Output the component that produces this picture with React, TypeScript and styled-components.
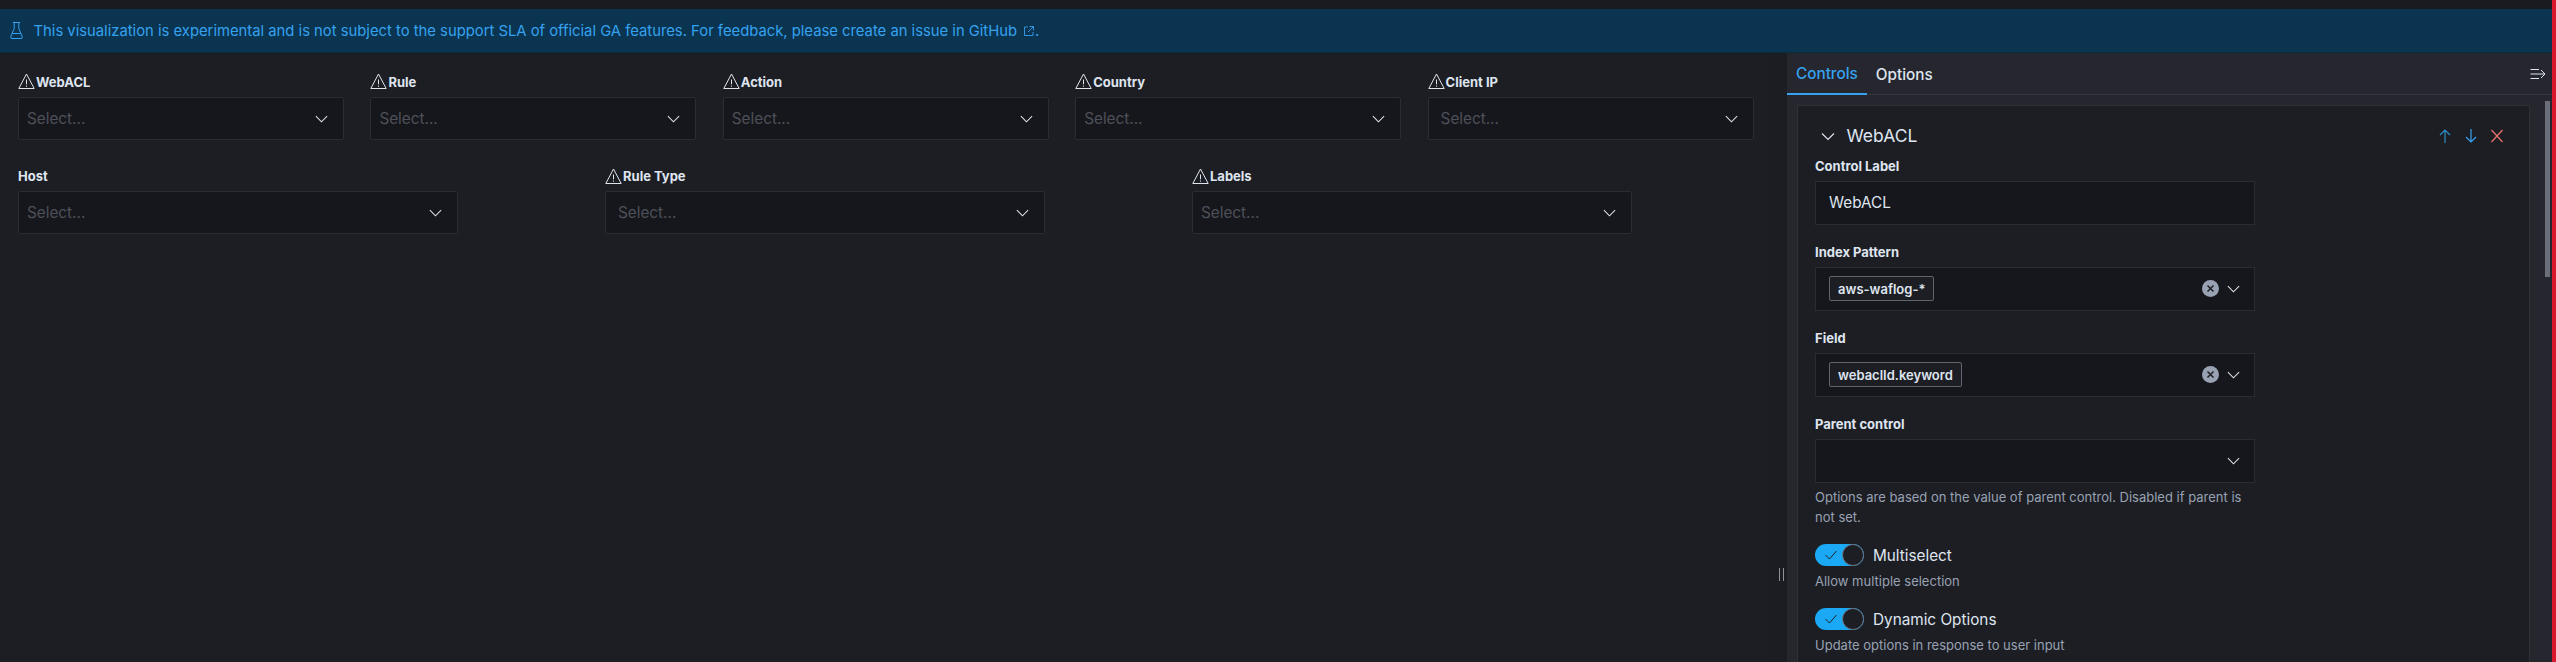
import styled, { createGlobalStyle } from 'styled-components';

const GlobalStyle = createGlobalStyle`
  html, body {
    margin: 0;
    padding: 0;
    height: 100%;
    background: #1d1e24;
    overflow: hidden;
  }
  #root {
    height: 100%;
  }
  * {
    box-sizing: border-box;
  }
`;

const Page = styled.div`
  display: flex;
  width: 2556px;
  height: 662px;
  overflow: hidden;
  font-family: Inter, 'Liberation Sans', sans-serif;
  color: #dfe5ef;
`;

const Content = styled.div`
  flex: 1;
  display: flex;
  flex-direction: column;
  min-width: 0;
`;

const RedEdge = styled.div`
  width: 4px;
  background: #d8182a;
`;

const TopStrip = styled.div`
  height: 9px;
  background: #1a1b20;
`;

const Banner = styled.div`
  height: 44px;
  display: flex;
  align-items: center;
  padding-left: 10px;
  gap: 10.5px;
  background: #0a344f;
  border-bottom: 1px solid #0b2b41;
  color: #36a2ef;
  font-size: 14.8px;
  svg {
    flex: none;
  }
`;

const BannerLink = styled.span`
  display: inline-flex;
  align-items: center;
  gap: 6px;
  margin-left: 4px;
`;

const Main = styled.div`
  flex: 1;
  display: flex;
  min-height: 0;
`;

const Canvas = styled.div`
  width: 1767px;
  padding: 18.5px 0 0 18px;
`;

const FirstRow = styled.div`
  display: grid;
  grid-template-columns: repeat(5, 326px);
  column-gap: 26.4px;
`;

const SecondRow = styled.div`
  display: grid;
  grid-template-columns: repeat(3, 440px);
  column-gap: 147px;
  margin-top: 26.5px;
`;

const FilterLabel = styled.div`
  display: flex;
  align-items: center;
  gap: 1px;
  height: 20px;
  margin-bottom: 5px;
  font-size: 13px;
  font-weight: 700;
  color: #dfe5ef;
`;

const SelectBox = styled.div<{ $inset?: boolean }>`
  height: 43px;
  display: flex;
  align-items: center;
  justify-content: space-between;
  padding: 0 14px 0 ${(p) => (p.$inset ? '12px' : '8px')};
  background: #16171c;
  border: 1px solid #2a2c32;
  border-radius: 2px;
  font-size: 15.3px;
  color: #4d5058;
`;

const Resizer = styled.div`
  width: 20px;
  display: flex;
  justify-content: center;
  padding: 515px 0 0 8px;
  background: #1c1d22;
`;

const Grip = styled.div`
  width: 5px;
  height: 13px;
  border-left: 1.5px solid #8d919b;
  border-right: 1.5px solid #8d919b;
`;

const Panel = styled.div`
  flex: 1;
  display: flex;
  flex-direction: column;
  min-width: 0;
  background: #25262e;
  position: relative;
`;

const TabBar = styled.div`
  height: 42px;
  flex: none;
  display: flex;
  align-items: stretch;
  border-bottom: 1px solid #34353d;
`;

const Tab = styled.div<{ $active?: boolean }>`
  display: flex;
  align-items: center;
  padding: 0 9px;
  height: 42px;
  font-size: 15.3px;
  font-weight: 500;
  color: ${(p) => (p.$active ? '#36a2ef' : '#dfe5ef')};
  border-bottom: ${(p) => (p.$active ? '2px solid #36a2ef' : 'none')};
`;

const CollapseButton = styled.div`
  margin-left: auto;
  display: flex;
  align-items: center;
  padding-right: 6px;
`;

const Card = styled.div`
  flex: 1;
  margin: 9.5px 22.5px 0 9.5px;
  padding: 19px 17.5px 0;
  background: #1d1e24;
  border: 1px solid #2f3037;
  border-bottom: none;
`;

const CardHeader = styled.div`
  display: flex;
  align-items: center;
  height: 22px;
  padding-left: 5px;
  margin-bottom: 9.5px;
  font-size: 17.5px;
  font-weight: 400;
  gap: 10.5px;
`;

const HeaderActions = styled.div`
  margin-left: auto;
  display: flex;
  align-items: center;
  gap: 10px;
  margin-right: 6px;
`;

const Field = styled.div`
  width: 439.5px;
  margin-bottom: 17.5px;
`;

const FieldLabel = styled.div`
  height: 20px;
  display: flex;
  align-items: center;
  margin-bottom: 5px;
  font-size: 13px;
  font-weight: 700;
`;

const TextInput = styled.div`
  height: 43.5px;
  display: flex;
  align-items: center;
  padding: 0 13px;
  background: #16171c;
  border: 1px solid #2a2c32;
  font-size: 15.3px;
  color: #dfe5ef;
`;

const ComboBox = styled.div<{ $empty?: boolean }>`
  height: 43.5px;
  display: flex;
  align-items: center;
  justify-content: ${(p) => (p.$empty ? 'flex-end' : 'flex-start')};
  padding: 0 13px;
  background: #16171c;
  border: 1px solid #2a2c32;
  gap: 7px;
  svg {
    flex: none;
  }
`;

const Pill = styled.span`
  height: 25px;
  display: inline-flex;
  align-items: center;
  padding: 0 8px;
  margin-right: auto;
  background: #1d1e24;
  border: 1px solid #5f6570;
  border-radius: 2px;
  font-size: 13px;
  font-weight: 600;
  color: #dfe5ef;
`;

const ClearIcon = styled.span`
  width: 17px;
  height: 17px;
  border-radius: 50%;
  background: #98a2b3;
  display: flex;
  align-items: center;
  justify-content: center;
  svg {
    display: block;
  }
`;

const HelpText = styled.div<{ $tight?: boolean }>`
  font-size: 13px;
  line-height: 20px;
  color: #98a2b3;
  margin-top: ${(p) => (p.$tight ? '5px' : '4px')};
`;

const SwitchBlock = styled.div`
  margin-bottom: 17px;
`;

const SwitchRow = styled.div`
  display: flex;
  align-items: center;
  gap: 9px;
  height: 22px;
  font-size: 15.3px;
`;

const SwitchTrack = styled.div`
  position: relative;
  width: 49px;
  height: 22px;
  border-radius: 11px;
  background: #1ba9f5;
  display: flex;
  align-items: center;
  padding-left: 9px;
`;

const SwitchThumb = styled.div`
  position: absolute;
  top: 0;
  right: 0;
  width: 22px;
  height: 22px;
  border-radius: 50%;
  background: #1d1e24;
  border: 1px solid #69707d;
`;

const ScrollThumb = styled.div`
  position: absolute;
  top: 48px;
  right: 2px;
  width: 5px;
  height: 176px;
  background: #6a6e78;
`;

const Chevron = ({ size = 15, color = '#dfe5ef' }: { size?: number; color?: string }) => (
  <svg width={size} height={size} viewBox="0 0 16 16" fill="none">
    <path d="M2 5.5 L8 11.5 L14 5.5" stroke={color} strokeWidth="1.1" />
  </svg>
);

const Warning = () => (
  <svg width="17" height="17" viewBox="0 0 17 17" fill="none">
    <path d="M8.5 1 L16.2 15.5 H0.8 Z" stroke="#dfe5ef" strokeWidth="1" strokeLinejoin="round" />
    <path d="M8.5 6.5 V11.3" stroke="#dfe5ef" strokeWidth="1" />
    <path d="M8.5 12.5 V13.7" stroke="#dfe5ef" strokeWidth="1" />
  </svg>
);

const Flask = () => (
  <svg width="13" height="17" viewBox="0 0 13 17" fill="none" stroke="#36a2ef" strokeWidth="1">
    <path d="M2.8 0.5 H10.2" />
    <path d="M4.2 0.5 V6.5 L0.8 14.5 Q0.3 16.5 2 16.5 H11 Q12.7 16.5 12.2 14.5 L8.8 6.5 V0.5" />
    <path d="M2.4 11.5 H10.6" />
  </svg>
);

const ExternalLink = () => (
  <svg width="12" height="12" viewBox="0 0 12 12" fill="none" stroke="#36a2ef" strokeWidth="0.9">
    <path d="M5 2 H1.5 V10.5 H10 V7" />
    <path d="M6.5 1.5 H10.5 V5.5 M10.5 1.5 L5 7" />
  </svg>
);

const ArrowUp = () => (
  <svg width="16" height="16" viewBox="0 0 16 16" fill="none" stroke="#2a8fc4" strokeWidth="1.2">
    <path d="M8 15 V2 M3 7 L8 2 L13 7" />
  </svg>
);

const ArrowDown = () => (
  <svg width="16" height="16" viewBox="0 0 16 16" fill="none" stroke="#36a2ef" strokeWidth="1.2">
    <path d="M8 1 V14 M3 9 L8 14 L13 9" />
  </svg>
);

const Cross = () => (
  <svg width="16" height="16" viewBox="0 0 16 16" fill="none" stroke="#e7716d" strokeWidth="1.3">
    <path d="M2.5 2 L13.5 14 M13.5 2 L2.5 14" />
  </svg>
);

const Collapse = () => (
  <svg width="16" height="14" viewBox="0 0 16 14" fill="none" stroke="#dfe5ef" strokeWidth="1">
    <path d="M0.5 2.5 H9 M0.5 7 H15 M0.5 11.5 H9 M11 3 L15 7 L11 11" />
  </svg>
);

const Check = () => (
  <svg width="14" height="12" viewBox="0 0 14 12" fill="none" stroke="#1d1e24" strokeWidth="1">
    <path d="M1.5 6 L5.5 10 L12.5 2" />
  </svg>
);

const SmallX = () => (
  <svg width="9" height="9" viewBox="0 0 9 9" fill="none" stroke="#1d1e24" strokeWidth="1.5">
    <path d="M1.5 1.5 L7.5 7.5 M7.5 1.5 L1.5 7.5" />
  </svg>
);

const firstFilters = [
  { name: 'WebACL', warn: true, inset: false },
  { name: 'Rule', warn: true, inset: false },
  { name: 'Action', warn: true, inset: false },
  { name: 'Country', warn: true, inset: false },
  { name: 'Client IP', warn: true, inset: true },
];
const secondFilters = [
  { name: 'Host', warn: false, inset: false },
  { name: 'Rule Type', warn: true, inset: true },
  { name: 'Labels', warn: true, inset: false },
];

const Filter = ({ name, warn, inset }: { name: string; warn: boolean; inset: boolean }) => (
  <div>
    <FilterLabel>
      {warn && <Warning />}
      {name}
    </FilterLabel>
    <SelectBox $inset={inset}>
      Select...
      <Chevron />
    </SelectBox>
  </div>
);

const Switch = ({ label, help }: { label: string; help: string }) => (
  <SwitchBlock>
    <SwitchRow>
      <SwitchTrack>
        <Check />
        <SwitchThumb />
      </SwitchTrack>
      {label}
    </SwitchRow>
    <HelpText $tight>{help}</HelpText>
  </SwitchBlock>
);

const Combo = ({ value }: { value: string }) => (
  <ComboBox>
    <Pill>{value}</Pill>
    <ClearIcon>
      <SmallX />
    </ClearIcon>
    <Chevron />
  </ComboBox>
);

export default function App() {
  return (
    <>
      <GlobalStyle />
      <Page>
        <Content>
          <TopStrip />
          <Banner>
            <Flask />
            <span>
              This visualization is experimental and is not subject to the support SLA of official
              GA features. For feedback, please create an issue in
              <BannerLink>
                GitHub <ExternalLink />
              </BannerLink>
              .
            </span>
          </Banner>
          <Main>
            <Canvas>
              <FirstRow>
                {firstFilters.map((f) => (
                  <Filter key={f.name} {...f} />
                ))}
              </FirstRow>
              <SecondRow>
                {secondFilters.map((f) => (
                  <Filter key={f.name} {...f} />
                ))}
              </SecondRow>
            </Canvas>
            <Resizer>
              <Grip />
            </Resizer>
            <Panel>
              <TabBar>
                <Tab $active>Controls</Tab>
                <Tab>Options</Tab>
                <CollapseButton>
                  <Collapse />
                </CollapseButton>
              </TabBar>
              <Card>
                <CardHeader>
                  <Chevron size={16} />
                  WebACL
                  <HeaderActions>
                    <ArrowUp />
                    <ArrowDown />
                    <Cross />
                  </HeaderActions>
                </CardHeader>
                <Field>
                  <FieldLabel>Control Label</FieldLabel>
                  <TextInput>WebACL</TextInput>
                </Field>
                <Field>
                  <FieldLabel>Index Pattern</FieldLabel>
                  <Combo value="aws-waflog-*" />
                </Field>
                <Field>
                  <FieldLabel>Field</FieldLabel>
                  <Combo value="webaclId.keyword" />
                </Field>
                <Field>
                  <FieldLabel>Parent control</FieldLabel>
                  <ComboBox $empty>
                    <Chevron />
                  </ComboBox>
                  <HelpText>
                    Options are based on the value of parent control. Disabled if parent is not set.
                  </HelpText>
                </Field>
                <Switch label="Multiselect" help="Allow multiple selection" />
                <Switch label="Dynamic Options" help="Update options in response to user input" />
              </Card>
              <ScrollThumb />
            </Panel>
          </Main>
        </Content>
        <RedEdge />
      </Page>
    </>
  );
}
